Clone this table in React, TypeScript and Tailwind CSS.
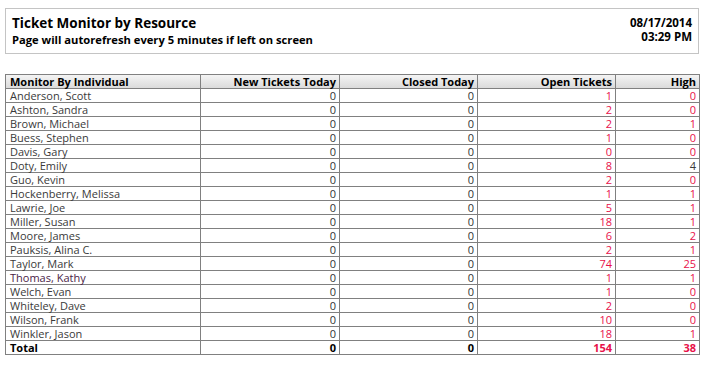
const rows: [string, number, number, number, number][] = [
  ['Anderson, Scott', 0, 0, 1, 0],
  ['Ashton, Sandra', 0, 0, 2, 0],
  ['Brown, Michael', 0, 0, 2, 1],
  ['Buess, Stephen', 0, 0, 1, 0],
  ['Davis, Gary', 0, 0, 0, 0],
  ['Doty, Emily', 0, 0, 8, 4],
  ['Guo, Kevin', 0, 0, 2, 0],
  ['Hockenberry, Melissa', 0, 0, 1, 1],
  ['Lawrie, Joe', 0, 0, 5, 1],
  ['Miller, Susan', 0, 0, 18, 1],
  ['Moore, James', 0, 0, 6, 2],
  ['Pauksis, Alina C.', 0, 0, 2, 1],
  ['Taylor, Mark', 0, 0, 74, 25],
  ['Thomas, Kathy', 0, 0, 1, 1],
  ['Welch, Evan', 0, 0, 1, 0],
  ['Whiteley, Dave', 0, 0, 2, 0],
  ['Wilson, Frank', 0, 0, 10, 0],
  ['Winkler, Jason', 0, 0, 18, 1],
]

export default function App() {
  return (
    <div className="min-h-screen bg-white px-[5px] pt-[8px] text-[11px] leading-[13px] text-[#222]" style={{ fontFamily: '"Open Sans", Arial, sans-serif' }}>
      {/* Title box */}
      <div className="flex justify-between border border-[#c4c4c4] pl-[6px] pr-[6px] pt-[6px] pb-[6px] w-[694px]">
        <div className="font-bold text-black">
          <div className="text-[13.5px] leading-[17px]">Ticket Monitor by Resource</div>
          <div className="text-[11.2px] leading-[15px]">Page will autorefresh every 5 minutes if left on screen</div>
        </div>
        <div className="text-right font-bold text-black text-[11.5px] leading-[14px] pt-[1px]">
          <div>08/17/2014</div>
          <div>03:29 PM</div>
        </div>
      </div>

      {/* Table */}
      <table className="mt-[20px] w-[694px] border-collapse table-fixed">
        <colgroup>
          <col className="w-[195px]" />
          <col className="w-[139px]" />
          <col className="w-[138px]" />
          <col className="w-[138px]" />
          <col className="w-[84px]" />
        </colgroup>
        <thead>
          <tr className="bg-gradient-to-b from-[#f4f4f4] to-[#d9d9d9] font-bold text-black">
            <th className="border border-[#808080] h-[14px] px-[4px] text-left font-bold">Monitor By Individual</th>
            <th className="border border-[#808080] px-[3px] text-right font-bold">New Tickets Today</th>
            <th className="border border-[#808080] px-[3px] text-right font-bold">Closed Today</th>
            <th className="border border-[#808080] px-[3px] text-right font-bold">Open Tickets</th>
            <th className="border border-[#808080] px-[3px] text-right font-bold">High</th>
          </tr>
        </thead>
        <tbody>
          {rows.map(([name, n, c, o, h]) => (
            <tr key={name}>
              <td className={`border border-[#808080] h-[14px] px-[4px] ${name === 'Thomas, Kathy' ? 'text-[#4a2346]' : 'text-[#3a3a3a]'}`}>{name}</td>
              <td className="border border-[#808080] px-[3px] text-right text-[#333]">{n}</td>
              <td className="border border-[#808080] px-[3px] text-right text-[#333]">{c}</td>
              <td className="border border-[#808080] px-[3px] text-right text-[#e8104a]">{o}</td>
              <td className={`border border-[#808080] px-[3px] text-right ${h === 4 ? 'text-[#3a3a3a]' : 'text-[#e8104a]'}`}>{h}</td>
            </tr>
          ))}
          <tr className="font-bold">
            <td className="border border-[#808080] h-[14px] px-[4px] text-black">Total</td>
            <td className="border border-[#808080] px-[3px] text-right text-black">0</td>
            <td className="border border-[#808080] px-[3px] text-right text-black">0</td>
            <td className="border border-[#808080] px-[3px] text-right text-[#e8104a]">154</td>
            <td className="border border-[#808080] px-[3px] text-right text-[#e8104a]">38</td>
          </tr>
        </tbody>
      </table>
    </div>
  )
}
